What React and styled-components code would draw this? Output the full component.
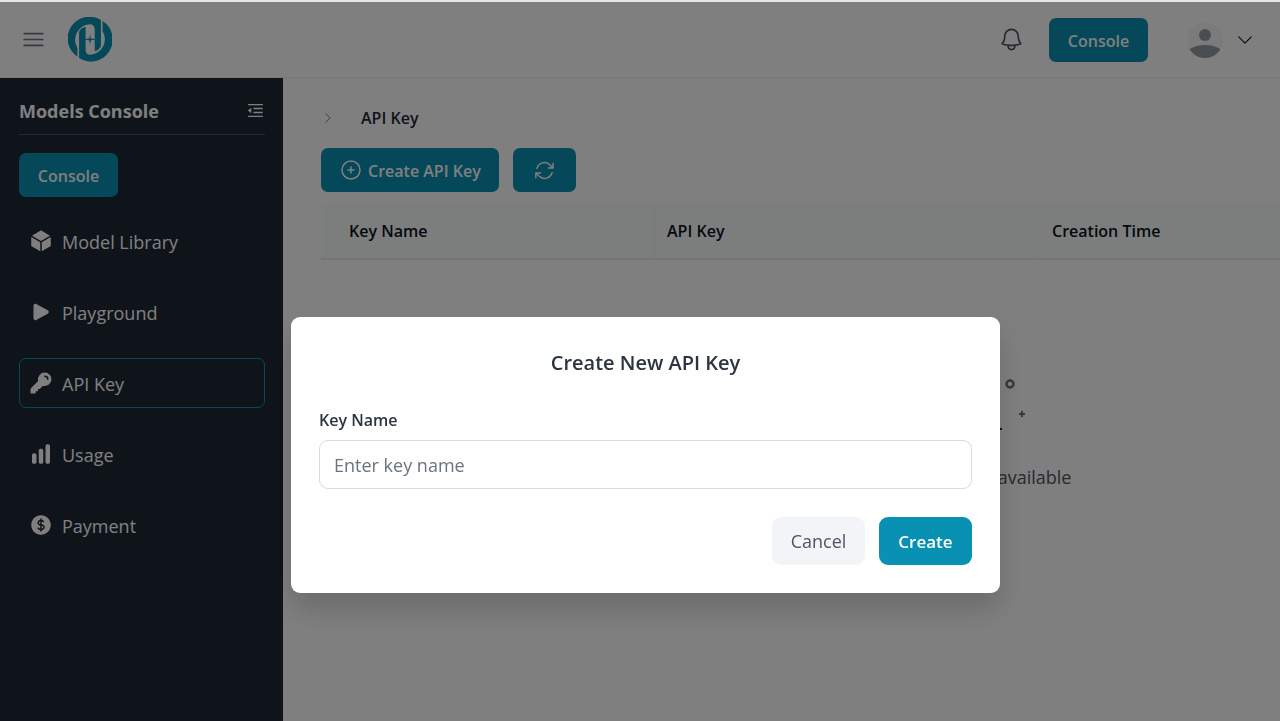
import React, { useState } from 'react';
import styled, { createGlobalStyle } from 'styled-components';
import {
  HiCube,
  HiPlay,
  HiKey,
  HiChartBar,
  HiCurrencyDollar,
  HiOutlineBars3,
  HiOutlineBell,
  HiOutlineChevronDown,
  HiOutlineChevronRight,
  HiOutlinePlusCircle,
  HiOutlineArrowPath,
} from 'react-icons/hi2';
import { AiOutlineMenuFold } from 'react-icons/ai';

const GlobalStyle = createGlobalStyle`
  * {
    box-sizing: border-box;
  }
  body {
    margin: 0;
    font-family: "Open Sans", "Noto Sans", sans-serif;
    font-size: 16px;
    color: #2b3440;
    background: #ffffff;
    overflow: hidden;
  }
  button, input {
    font-family: inherit;
  }
  svg {
    display: block;
    flex-shrink: 0;
  }
`;

const Page = styled.div`
  min-height: 100vh;
  display: flex;
  flex-direction: column;
  border-top: 2px solid #e5e7eb;
`;

const Header = styled.header`
  height: 76px;
  display: flex;
  align-items: center;
  padding: 0 25px 0 20px;
  border-bottom: 1px solid #f0f0f2;
`;

const IconButton = styled.button`
  display: flex;
  padding: 0;
  border: none;
  background: none;
  color: ${(props) => props.$color || '#4b5563'};
  cursor: pointer;
`;

const LogoLink = styled.a`
  display: flex;
  margin-left: 21px;
`;

const HeaderRight = styled.div`
  margin-left: auto;
  display: flex;
  align-items: center;
`;

const PrimaryButton = styled.button`
  display: inline-flex;
  align-items: center;
  justify-content: center;
  gap: 5px;
  height: 44px;
  min-width: 63px;
  padding: 0 18px;
  border: none;
  border-radius: 7px;
  background: #0891b2;
  color: #ffffff;
  font-size: 16px;
  font-weight: 600;
  white-space: nowrap;
  cursor: pointer;
`;

const ButtonText = styled.span`
  padding-top: 2px;
`;

const ConsoleButton = styled(PrimaryButton)`
  min-width: 99px;
`;

const HeaderConsole = styled(ConsoleButton)`
  margin: 0 38px 0 24px;
`;

const UserMenu = styled(IconButton)`
  align-items: center;
  gap: 11px;
`;

const Body = styled.div`
  flex: 1;
  display: flex;
`;

const Sidebar = styled.aside`
  width: 283px;
  flex-shrink: 0;
  padding: 14px 18px 0 19px;
  background: #1f2937;
  color: #ffffff;
`;

const SidebarTop = styled.div`
  display: flex;
  align-items: center;
  justify-content: space-between;
  height: 43px;
  padding-bottom: 6px;
  margin-bottom: 18px;
  border-bottom: 1px solid #4b5563;
`;

const SidebarTitle = styled.h2`
  margin: 0;
  padding-top: 2px;
  font-size: 18px;
  font-weight: 700;
`;

const Nav = styled.nav`
  display: flex;
  flex-direction: column;
  gap: 21px;
  margin-top: 19px;
`;

const NavItem = styled.a`
  display: flex;
  align-items: center;
  gap: 9px;
  height: 50px;
  padding: 0 9px;
  border: 1px solid ${(props) => (props.$active ? '#0891b2' : 'transparent')};
  border-radius: 7px;
  color: #ffffff;
  font-size: 18px;
  text-decoration: none;
`;

const Main = styled.main`
  flex: 1;
  min-width: 0;
  overflow: hidden;
  padding: 28px 0 0 38px;
`;

const Breadcrumb = styled.div`
  display: flex;
  align-items: center;
  gap: 26px;
  height: 24px;
  font-size: 16px;
  font-weight: 600;
  color: #1f2937;
`;

const Toolbar = styled.div`
  display: flex;
  gap: 14px;
  margin: 18px 0 11px;
`;

const TableWrap = styled.div`
  width: 1356px;
`;

const Table = styled.table`
  width: 100%;
  table-layout: fixed;
  border-collapse: separate;
  border-spacing: 0;
`;

const Th = styled.th`
  width: ${(props) => props.$width};
  height: 57px;
  padding: 0 12px 0 ${(props) => (props.$first ? '28px' : '12px')};
  border-right: 1px solid ${(props) => (props.$first ? '#f0f3f2' : 'transparent')};
  border-bottom: 2px solid #e6ecea;
  background: #f8fcfa;
  color: #0b1220;
  font-size: 16px;
  font-weight: 600;
  text-align: left;
`;

const Empty = styled.div`
  display: flex;
  flex-direction: column;
  align-items: center;
  gap: 19px;
  padding-top: 110px;
  color: #4b5563;
  font-size: 18px;
`;

const Overlay = styled.div`
  position: fixed;
  inset: 2px 0 0 0;
  display: flex;
  justify-content: center;
  align-items: flex-start;
  padding: 315px 0 0 11px;
  background: rgba(0, 0, 0, 0.5);
`;

const Modal = styled.form`
  width: 709px;
  padding: 28px;
  border-radius: 9px;
  background: #ffffff;
  box-shadow: 0 16px 28px rgba(0, 0, 0, 0.16);
`;

const ModalTitle = styled.h3`
  margin: 0 0 28px;
  font-size: 20px;
  line-height: 36px;
  font-weight: 600;
  text-align: center;
`;

const Label = styled.label`
  display: block;
  margin-bottom: 8px;
  font-size: 16px;
  line-height: 23px;
  font-weight: 600;
`;

const Input = styled.input`
  display: block;
  width: 100%;
  height: 49px;
  padding: 0 14px;
  border: 1px solid #d9dbe2;
  border-radius: 9px;
  outline: none;
  color: #1f2937;
  font-size: 18px;
  &::placeholder {
    color: #6b7280;
    opacity: 1;
  }
`;

const ModalActions = styled.div`
  display: flex;
  justify-content: flex-end;
  gap: 14px;
  margin-top: 28px;
`;

const ModalButton = styled.button`
  min-width: 93px;
  height: 48px;
  padding: 0 18px;
  border: none;
  border-radius: 9px;
  background: ${(props) => (props.$primary ? '#0891b2' : '#f3f4f8')};
  color: ${(props) => (props.$primary ? '#ffffff' : '#4b5563')};
  font-size: ${(props) => (props.$primary ? '17px' : '18px')};
  font-weight: ${(props) => (props.$primary ? 600 : 400)};
  cursor: pointer;
`;

const Logo = () => (
  <svg width="44" height="45" viewBox="0 0 135 138" fill="#0891b2">
    <path d="M29 122 A67 67 0 0 1 101 9 V88 Q97 101 82 105 V39 Q82 22 66 22 A48 48 0 0 0 29 95 Z" />
    <path d="M106 12 A67 67 0 0 1 34 126 V45 Q39 33 54 31 V99 Q54 116 68 116 A48 48 0 0 0 106 43 Z" />
    <path d="M68 54 L70 66 L90 69 L70 71 L68 84 L65 71 L46 69 L65 66 Z" />
  </svg>
);

const Avatar = () => (
  <svg width="38" height="38" viewBox="0 0 38 38">
    <defs>
      <clipPath id="avatar-clip">
        <circle cx="19" cy="19" r="18" />
      </clipPath>
    </defs>
    <circle cx="19" cy="19" r="18" fill="#f6f7f8" />
    <g clipPath="url(#avatar-clip)" fill="#979ca3">
      <circle cx="19" cy="14" r="6" />
      <ellipse cx="19" cy="34" rx="19" ry="10" />
    </g>
  </svg>
);

const EmptyPicture = () => (
  <svg width="76" height="76" viewBox="0 0 76 76" fill="none" stroke="#6b7280" strokeWidth="2">
    <path d="M8 59V14h26v45" />
    <circle cx="49" cy="14" r="3.5" strokeWidth="2.5" />
    <path d="M61 41v6M58 44h6" />
    <path d="M4 59h37" stroke="#1f2937" />
  </svg>
);

const navItems = [
  { name: 'Model Library', icon: HiCube },
  { name: 'Playground', icon: HiPlay },
  { name: 'API Key', icon: HiKey, active: true },
  { name: 'Usage', icon: HiChartBar },
  { name: 'Payment', icon: HiCurrencyDollar },
];

const App = () => {
  const [open, setOpen] = useState(true);
  const [keyName, setKeyName] = useState('');

  const onSubmit = (e) => {
    e.preventDefault();
    setOpen(false);
  };

  return (
    <>
      <GlobalStyle />
      <Page>
        <Header>
          <IconButton aria-label="Menu" $color="#6b7280">
            <HiOutlineBars3 size={27} />
          </IconButton>
          <LogoLink href="#" aria-label="Home">
            <Logo />
          </LogoLink>
          <HeaderRight>
            <IconButton aria-label="Notifications" $color="#4b5563">
              <HiOutlineBell size={27} />
            </IconButton>
            <HeaderConsole>
              <ButtonText>Console</ButtonText>
            </HeaderConsole>
            <UserMenu aria-label="Account" $color="#111827">
              <Avatar />
              <HiOutlineChevronDown size={20} />
            </UserMenu>
          </HeaderRight>
        </Header>
        <Body>
          <Sidebar>
            <SidebarTop>
              <SidebarTitle>Models Console</SidebarTitle>
              <IconButton aria-label="Collapse sidebar" $color="#ffffff">
                <AiOutlineMenuFold size={19} />
              </IconButton>
            </SidebarTop>
            <ConsoleButton>
              <ButtonText>Console</ButtonText>
            </ConsoleButton>
            <Nav>
              {navItems.map(({ name, icon: Icon, active }) => (
                <NavItem key={name} href="#" $active={active}>
                  <Icon size={24} />
                  <ButtonText>{name}</ButtonText>
                </NavItem>
              ))}
            </Nav>
          </Sidebar>
          <Main>
            <Breadcrumb>
              <HiOutlineChevronRight size={14} color="#6b7280" />
              API Key
            </Breadcrumb>
            <Toolbar>
              <PrimaryButton onClick={() => setOpen(true)}>
                <HiOutlinePlusCircle size={24} />
                <ButtonText>Create API Key</ButtonText>
              </PrimaryButton>
              <PrimaryButton aria-label="Refresh">
                <HiOutlineArrowPath size={23} />
              </PrimaryButton>
            </Toolbar>
            <TableWrap>
              <Table>
                <thead>
                  <tr>
                    <Th $width="334px" $first>Key Name</Th>
                    <Th $width="385px">API Key</Th>
                    <Th>Creation Time</Th>
                  </tr>
                </thead>
              </Table>
              <Empty>
                <EmptyPicture />
                No data available
              </Empty>
            </TableWrap>
          </Main>
        </Body>
      </Page>
      {open && (
        <Overlay>
          <Modal onSubmit={onSubmit} role="dialog" aria-labelledby="modal-title">
            <ModalTitle id="modal-title">Create New API Key</ModalTitle>
            <Label htmlFor="key-name">Key Name</Label>
            <Input
              id="key-name"
              placeholder="Enter key name"
              value={keyName}
              onChange={(e) => setKeyName(e.target.value)}
            />
            <ModalActions>
              <ModalButton type="button" onClick={() => setOpen(false)}>Cancel</ModalButton>
              <ModalButton type="submit" $primary>Create</ModalButton>
            </ModalActions>
          </Modal>
        </Overlay>
      )}
    </>
  );
};

export default App;
